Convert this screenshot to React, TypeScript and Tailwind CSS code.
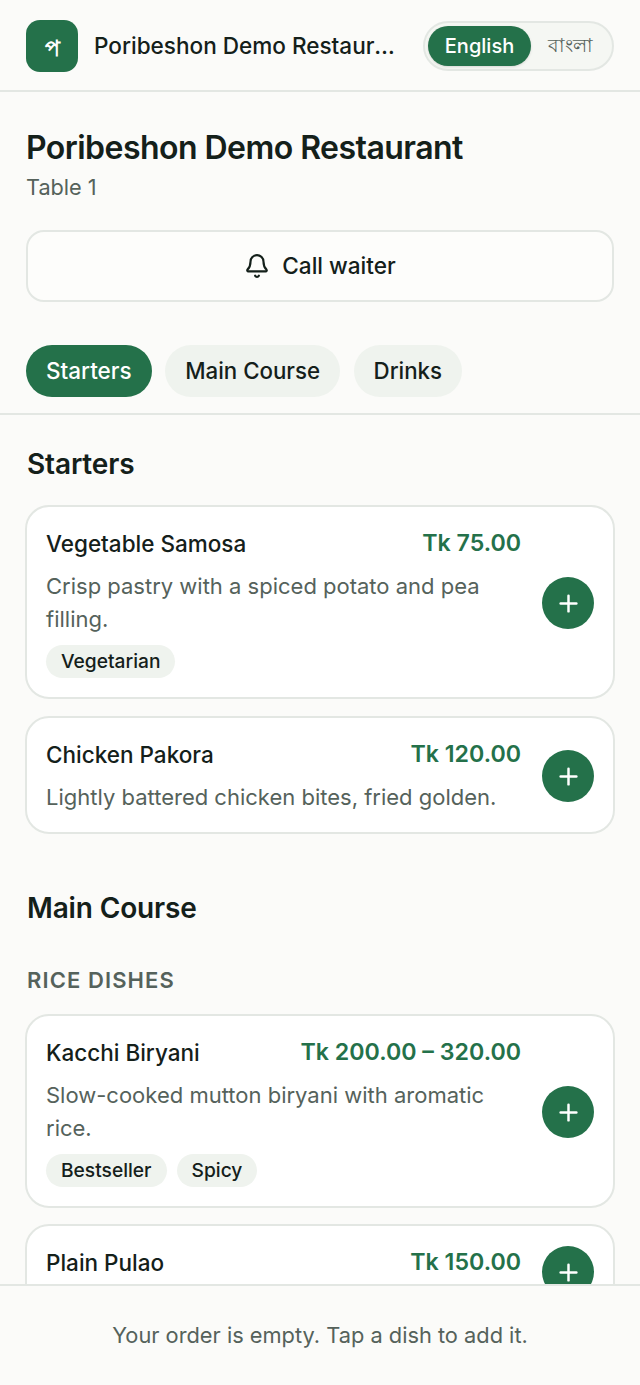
import { Bell, Plus } from "lucide-react";

interface Dish {
  name: string;
  price: string;
  description?: string;
  tags?: string[];
}

const starters: Dish[] = [
  {
    name: "Vegetable Samosa",
    price: "Tk 75.00",
    description: "Crisp pastry with a spiced potato and pea filling.",
    tags: ["Vegetarian"],
  },
  {
    name: "Chicken Pakora",
    price: "Tk 120.00",
    description: "Lightly battered chicken bites, fried golden.",
  },
];

const riceDishes: Dish[] = [
  {
    name: "Kacchi Biryani",
    price: "Tk 200.00 – 320.00",
    description: "Slow-cooked mutton biryani with aromatic rice.",
    tags: ["Bestseller", "Spicy"],
  },
  {
    name: "Plain Pulao",
    price: "Tk 150.00",
  },
];

function DishCard({ dish }: { dish: Dish }) {
  return (
    <div className="flex items-start gap-[21px] rounded-[24px] border-2 border-[#e3e7e3] bg-white pb-[18px] pl-[19px] pr-[19px] pt-5">
      <div className="min-w-0 flex-1">
        <div className="flex items-start justify-between gap-4">
          <h3 className="text-[22.5px] font-medium leading-[33px] text-[#14201a]">{dish.name}</h3>
          <p className="whitespace-nowrap text-[23.2px] font-semibold leading-[33px] text-[#24714a]">{dish.price}</p>
        </div>
        {dish.description && (
          <p className="mt-[10px] text-[22px] leading-[33px] text-[#55625b]">{dish.description}</p>
        )}
        {dish.tags && (
          <div className="mb-[1px] mt-[9px] flex gap-[10px]">
            {dish.tags.map((tag) => (
              <span key={tag} className="rounded-full bg-[#eff3ee] px-[15px] py-[4px] text-[19.2px] font-medium leading-[25px] text-[#14201a]">
                {tag}
              </span>
            ))}
          </div>
        )}
      </div>
      <button className="flex h-[52px] w-[52px] shrink-0 items-center justify-center self-center rounded-full bg-[#24714a] text-white">
        <Plus size={27} strokeWidth={2.2} />
      </button>
    </div>
  );
}

export default function App() {
  return (
    <div className="h-screen overflow-hidden bg-[#fbfbf9] font-['Inter',sans-serif] text-[#14201a]">
      <header className="flex h-[92px] items-center gap-4 border-b-2 border-[#e3e7e3] px-[26px] pt-[2px]">
        <div className="flex h-[52px] w-[52px] shrink-0 items-center justify-center rounded-[14px] bg-[#24714a] font-['Noto_Sans_CJK_SC','Noto_Sans',sans-serif] text-[22px] font-bold text-white">
          প
        </div>
        <p className="min-w-0 flex-1 truncate text-[22.55px] font-medium">Poribeshon Demo Restaurant</p>
        <div className="flex h-[50px] w-[191px] shrink-0 items-center rounded-full border-2 border-[#e3e7e3] bg-[#f5f7f3] p-[3px]">
          <span className="flex h-[40px] w-[103px] items-center justify-center rounded-full bg-[#24714a] text-[20px] font-medium text-white shadow-sm">
            English
          </span>
          <span className="flex-1 text-center text-[19px] text-[#55625b]">বাংলা</span>
        </div>
      </header>

      <section className="px-[26px] pt-[34px]">
        <h1 className="text-[32px] font-semibold leading-[44px] tracking-[-0.017em]">Poribeshon Demo Restaurant</h1>
        <p className="mt-[1px] text-[21.7px] leading-[33px] text-[#55625b]">Table 1</p>
        <button className="mt-[26px] flex h-[72px] w-full items-center justify-center gap-3 rounded-[18px] border-2 border-[#e3e7e3] bg-[#fdfdfb] text-[22.6px] font-medium">
          <Bell size={26} strokeWidth={2} />
          Call waiter
        </button>
      </section>

      <nav className="mt-[43px] flex gap-[13.5px] border-b-2 border-[#e3e7e3] px-[26px] pb-[16px]">
        <span className="flex h-[52px] items-center rounded-full bg-[#24714a] px-5 text-[22.5px] font-medium text-white">Starters</span>
        <span className="flex h-[52px] items-center rounded-full bg-[#eff3ee] px-5 text-[22.3px] font-medium">Main Course</span>
        <span className="flex h-[52px] items-center rounded-full bg-[#eff3ee] px-5 text-[22.3px] font-medium">Drinks</span>
      </nav>

      <main className="px-[25px] pt-[29px]">
        <h2 className="px-[2px] text-[28px] font-semibold leading-[40px] tracking-[-0.005em]">Starters</h2>
        <div className="mt-[21px] flex flex-col gap-[17px]">
          {starters.map((dish) => (
            <DishCard key={dish.name} dish={dish} />
          ))}
        </div>
        <h2 className="mt-[54px] px-[2px] text-[28px] font-semibold leading-[40px] tracking-[-0.005em]">Main Course</h2>
        <h3 className="mt-[37px] px-[2px] text-[22px] font-semibold uppercase leading-[30px] tracking-[0.05em] text-[#55625b]">Rice Dishes</h3>
        <div className="mt-[19px] flex flex-col gap-4">
          {riceDishes.map((dish) => (
            <DishCard key={dish.name} dish={dish} />
          ))}
        </div>
      </main>

      <footer className="fixed inset-x-0 bottom-0 flex h-[101px] items-center justify-center border-t-2 border-[#e3e7e3] bg-[#fbfbf9] text-[21.8px] text-[#55625b]">
        Your order is empty. Tap a dish to add it.
      </footer>
    </div>
  );
}
